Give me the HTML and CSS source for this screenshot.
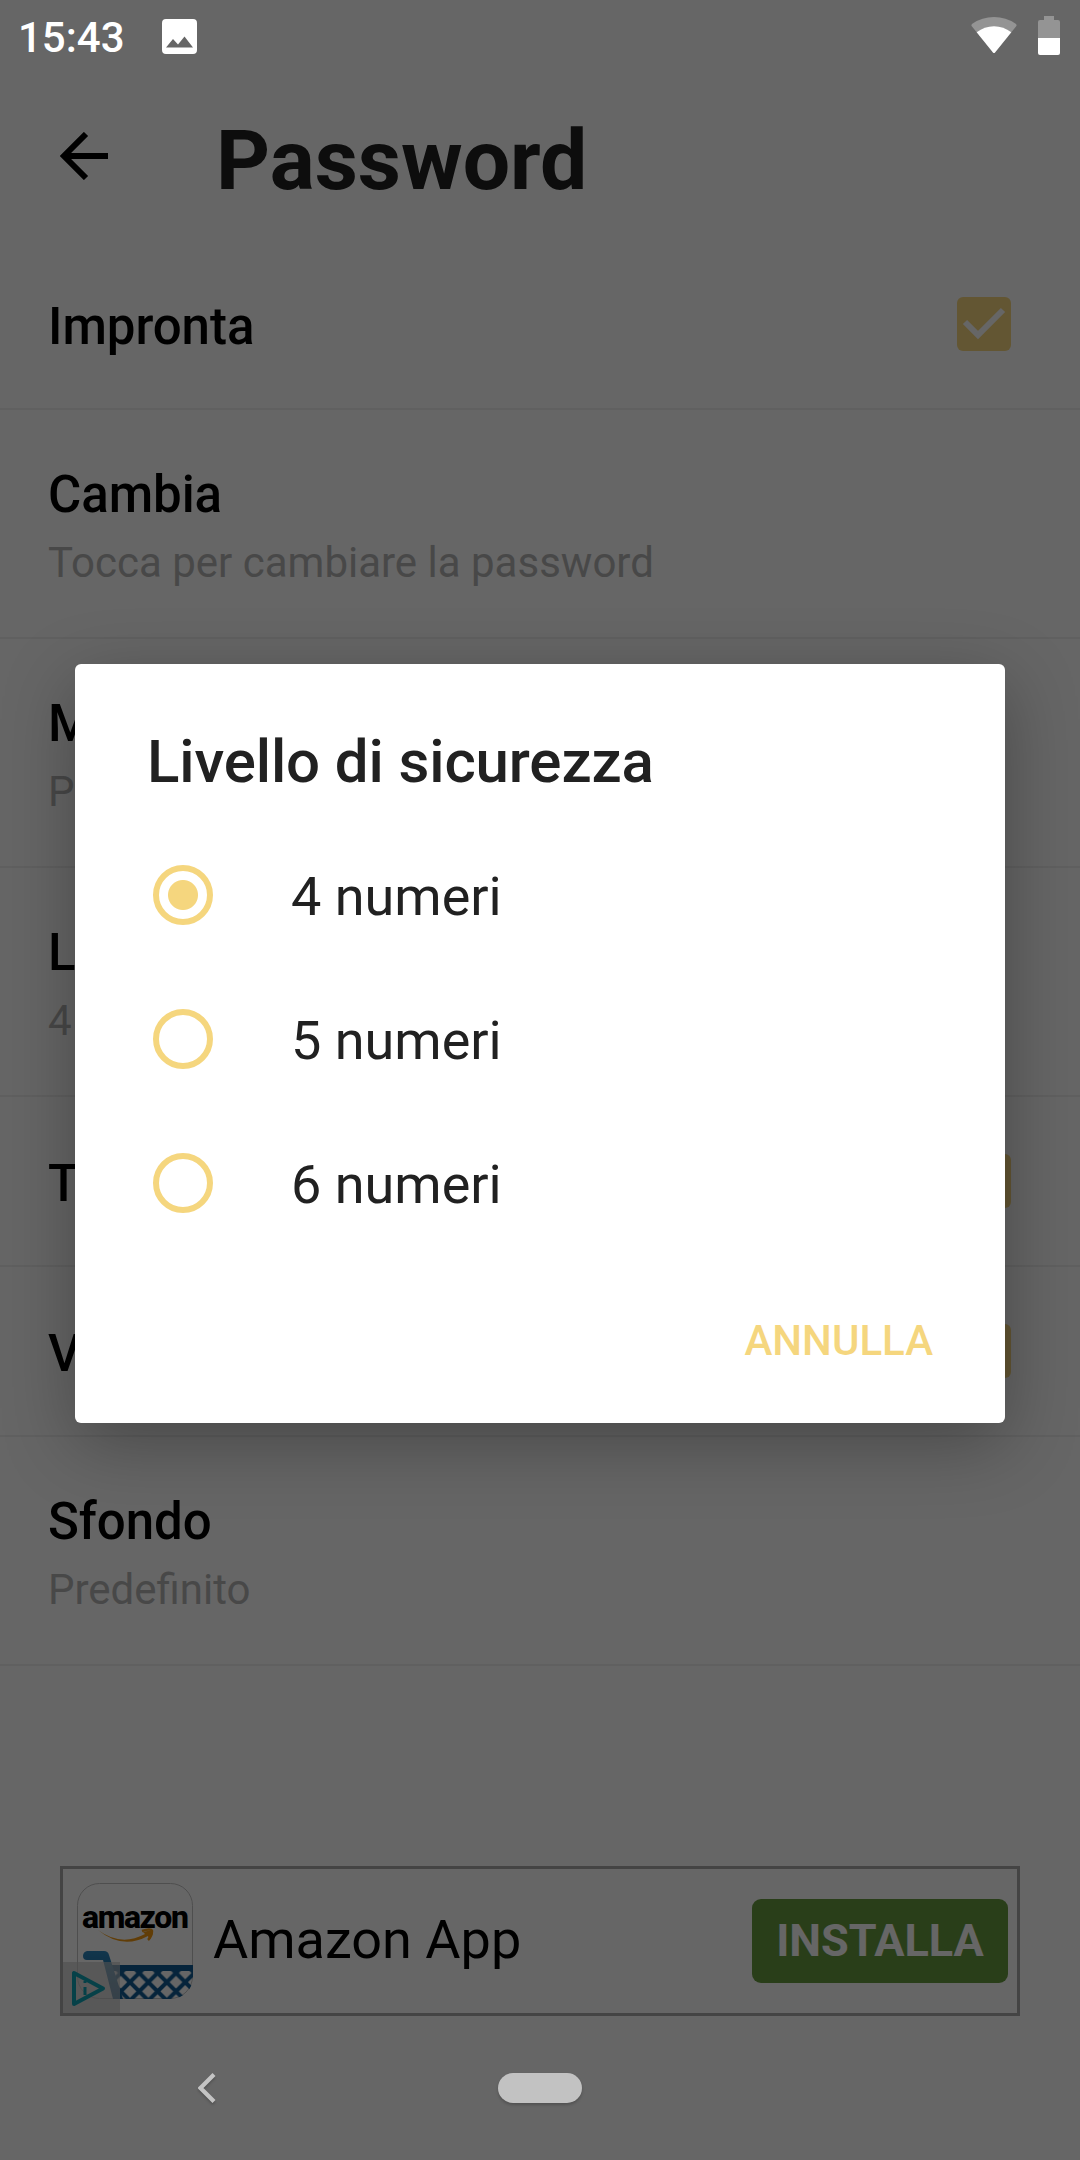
FILE: index.html
```html
<!DOCTYPE html>
<html lang="it">
<head>
  <meta charset="UTF-8" />
  <meta name="viewport" content="width=device-width, initial-scale=1.0"/>
  <title>Password</title>
  <link rel="stylesheet" href="styles.css">
</head>
<body>
  <div class="screen">

    <!-- STATUS BAR -->
    <div class="status-bar">
      <span class="clock">15:43</span>
      <svg class="icon-photo" width="35" height="35" viewBox="0 0 35 35">
        <path fill="#fff" fill-rule="evenodd" d="M4 0H31Q35 0 35 4V31Q35 35 31 35H4Q0 35 0 31V4Q0 0 4 0ZM4 28.5H31L22.5 17.5L16 25.5L11 20Z"/>
      </svg>
      <svg class="icon-wifi" width="46" height="37" viewBox="0 0 46 37">
        <path fill="#949494" d="M1 9.5Q-.3 8 1.300 6.700Q11 0 23 0T44.700 6.700Q46.300 8 45 9.500L24 35.400Q23 36.500 22 35.400Z"/>
        <path fill="#fff" d="M5.700 15.200Q13.500 9.200 23 9.200T40.300 15.200L24 35.400Q23 36.500 22 35.400Z"/>
      </svg>
      <svg class="icon-battery" width="22" height="39" viewBox="0 0 22 39">
        <path fill="#949494" d="M6 0H16V4H20Q22 4 22 6V22H0V6Q0 4 2 4H6Z"/>
        <path fill="#fff" d="M0 22H22V37Q22 39 20 39H2Q0 39 0 37Z"/>
      </svg>
    </div>

    <!-- TOOLBAR -->
    <div class="toolbar">
      <svg class="back" width="48" height="48" viewBox="0 0 48 48">
        <path d="M26 2L4 24L26 46M4 24H48" fill="none" stroke="#000" stroke-width="6"/>
      </svg>
      <h1>Password</h1>
    </div>

    <!-- SETTINGS -->
    <div class="settings">
      <div class="row single">
        <h2>Impronta</h2>
        <svg class="checkbox" viewBox="0 0 54 54"><rect width="54" height="54" rx="6"/><path d="M8 25L21 38L46 13"/></svg>
      </div>
      <div class="row double">
        <h2>Cambia</h2>
        <p>Tocca per cambiare la password</p>
      </div>
      <div class="row double">
        <h2>M</h2>
        <p>P</p>
      </div>
      <div class="row double">
        <h2>L</h2>
        <p>4</p>
      </div>
      <div class="row single">
        <h2>T</h2>
        <svg class="checkbox" viewBox="0 0 54 54"><rect width="54" height="54" rx="6"/><path d="M8 25L21 38L46 13"/></svg>
      </div>
      <div class="row single">
        <h2>V</h2>
        <svg class="checkbox" viewBox="0 0 54 54"><rect width="54" height="54" rx="6"/><path d="M8 25L21 38L46 13"/></svg>
      </div>
      <div class="row double">
        <h2>Sfondo</h2>
        <p>Predefinito</p>
      </div>
    </div>

    <!-- BANNER -->
    <div class="banner">
      <svg class="app-icon" width="131" height="144" viewBox="0 0 131 144">
        <defs>
          <clipPath id="card"><rect x="14" y="14" width="116" height="116" rx="22"/></clipPath>
          <linearGradient id="blue" x1="0" y1="0" x2="0" y2="1">
            <stop offset="0" stop-color="#2d87bd"/>
            <stop offset="1" stop-color="#105a93"/>
          </linearGradient>
          <pattern id="mesh" x="67" y="94.800" width="18.400" height="18.400" patternUnits="userSpaceOnUse">
            <path d="M-2 -2L20.400 20.400M20.400 -2L-2 20.400" stroke="#0f5a93" stroke-width="4"/>
          </pattern>
        </defs>
        <rect x="14.500" y="14.500" width="115" height="115" rx="22" fill="#fff" stroke="#c4c4c4"/>
        <text class="brand" x="19" y="59">amazon</text>
        <path d="M35 61Q58 78 82 65L80 63L89 61Q91 66 86 71L85 67Q59 81 35 61Z" fill="#f39a13"/>
        <path d="M79 62Q88 59 89 62Q89 67 85 71" fill="none" stroke="#f39a13" stroke-width="2.500"/>
        <g clip-path="url(#card)">
          <rect x="52" y="98" width="80" height="34" fill="url(#mesh)"/>
          <path d="M46 96H131V102H48Z" fill="#0f5a93"/>
          <path d="M24 82H41Q45 82 46 86L60 130H50L40 91H24Q20 91 20 87T24 82Z" fill="url(#blue)"/>
        </g>
        <rect x="0" y="93" width="57" height="51" fill="#c8c8c8" fill-opacity=".65"/>
        <path d="M11 104V135L40 119.500Z" fill="none" stroke="#11a2b5" stroke-width="4" stroke-linejoin="round"/>
        <path d="M22 118V126M22 112V114" stroke="#11a2b5" stroke-width="3"/>
      </svg>
      <span class="app-name">Amazon App</span>
      <button class="install">INSTALLA</button>
    </div>

    <!-- NAVIGATION BAR -->
    <div class="nav-bar">
      <svg class="nav-back" width="18" height="30" viewBox="0 0 18 30">
        <path d="M16 1.500L2.500 15L16 28.500" fill="none" stroke="#c4c4c4" stroke-width="4.200"/>
      </svg>
      <div class="nav-home"></div>
    </div>

    <!-- DIALOG -->
    <div class="overlay">
      <div class="dialog">
        <h3>Livello di sicurezza</h3>
        <label class="option"><span class="radio checked"></span><span class="option-text">4 numeri</span></label>
        <label class="option"><span class="radio"></span><span class="option-text">5 numeri</span></label>
        <label class="option"><span class="radio"></span><span class="option-text">6 numeri</span></label>
        <button class="cancel">ANNULLA</button>
      </div>
    </div>

  </div>
</body>
</html>
```
FILE: styles.css
```css
* {
  box-sizing: border-box;
}
body {
  font-family: Roboto, sans-serif;
  background: #fff;
  color: #000;
  margin: 0;
}
h1, h2, h3, p {
  margin: 0;
  white-space: nowrap;
}
button {
  border: none;
  padding: 0;
  font-family: inherit;
}
.screen {
  position: relative;
  display: flex;
  flex-direction: column;
  width: 1080px;
  height: 2160px;
  overflow: hidden;
}
.status-bar {
  position: relative;
  z-index: 2;
  display: flex;
  align-items: flex-start;
  height: 72px;
  padding: 0 20px 0 18px;
  color: #fff;
}
.clock {
  width: 144px;
  margin-top: 13px;
  font-size: 42px;
  line-height: 50px;
  font-weight: 500;
}
.icon-photo {
  margin-top: 19px;
}
.icon-wifi {
  margin: 17px 21px 0 auto;
}
.icon-battery {
  margin-top: 16px;
}
.toolbar {
  display: flex;
  align-items: center;
  height: 168px;
  padding: 0 60px;
}
.toolbar h1 {
  margin-left: 108px;
  padding-top: 9px;
  font-size: 84px;
  line-height: 100px;
  font-weight: 700;
  color: #212121;
}
.row {
  padding: 0 69px 0 48px;
  border-bottom: 2px solid #f0f0f0;
}
.row h2 {
  font-size: 51px;
  line-height: 60px;
  font-weight: 500;
  letter-spacing: -0.05px;
}
.row p {
  margin-top: 13px;
  font-size: 42px;
  line-height: 50px;
  color: #b4b4b4;
}
.single {
  display: flex;
  align-items: center;
  justify-content: space-between;
  height: 170px;
}
.single h2 {
  padding-top: 6px;
}
.double {
  height: 229px;
  padding-top: 55px;
}
.checkbox {
  width: 54px;
  height: 54px;
}
.checkbox rect {
  fill: #f8d880;
}
.checkbox path {
  fill: none;
  stroke: #fff;
  stroke-width: 6px;
}
.banner {
  display: flex;
  align-items: center;
  width: 960px;
  height: 150px;
  margin: 200px auto 0;
  border: 3px solid #aaa;
}
.brand {
  font-size: 32px;
  font-weight: 800;
  letter-spacing: -1.4px;
}
.app-name {
  margin-left: 19px;
  padding-bottom: 2px;
  font-size: 54px;
  line-height: 64px;
}
.install {
  width: 256px;
  height: 84px;
  margin: 0 9px 0 auto;
  padding-bottom: 1px;
  border-radius: 9px;
  background: #689b40;
  color: #fff;
  font-size: 45px;
  font-weight: 700;
}
.nav-bar {
  position: relative;
  z-index: 2;
  display: flex;
  align-items: center;
  height: 144px;
  padding-left: 198px;
}
.nav-back {
  filter: drop-shadow(0 2px 1px #0003);
}
.nav-home {
  width: 84px;
  height: 30px;
  margin-left: 282px;
  border-radius: 15px;
  background: #c2c2c2;
  box-shadow: 0 2px 3px #0003;
}
.overlay {
  position: absolute;
  inset: 0;
  padding: 664px 75px 0;
  background: rgba(0, 0, 0, 0.6);
}
.dialog {
  display: flex;
  flex-direction: column;
  height: 759px;
  padding: 63px 72px 0;
  border-radius: 6px;
  background: #fff;
  color: #212121;
  box-shadow: 0 20px 72px rgba(0, 0, 0, 0.3);
}
.dialog h3 {
  margin-bottom: 26px;
  font-size: 60px;
  line-height: 70px;
  font-weight: 500;
  letter-spacing: -0.12px;
}
.option {
  display: flex;
  align-items: center;
  height: 144px;
  padding-left: 6px;
  font-size: 54px;
}
.option-text {
  padding-top: 3px;
}
.radio {
  width: 60px;
  height: 60px;
  margin-right: 78px;
  border: 6px solid #f5d67e;
  border-radius: 50%;
}
.checked {
  background: radial-gradient(circle, #f5d67e 14.5px, #fff 15.5px);
}
.cancel {
  align-self: flex-end;
  margin-top: 61px;
  background: none;
  color: #f5d67e;
  font-size: 42px;
  line-height: 50px;
  font-weight: 500;
}
```
